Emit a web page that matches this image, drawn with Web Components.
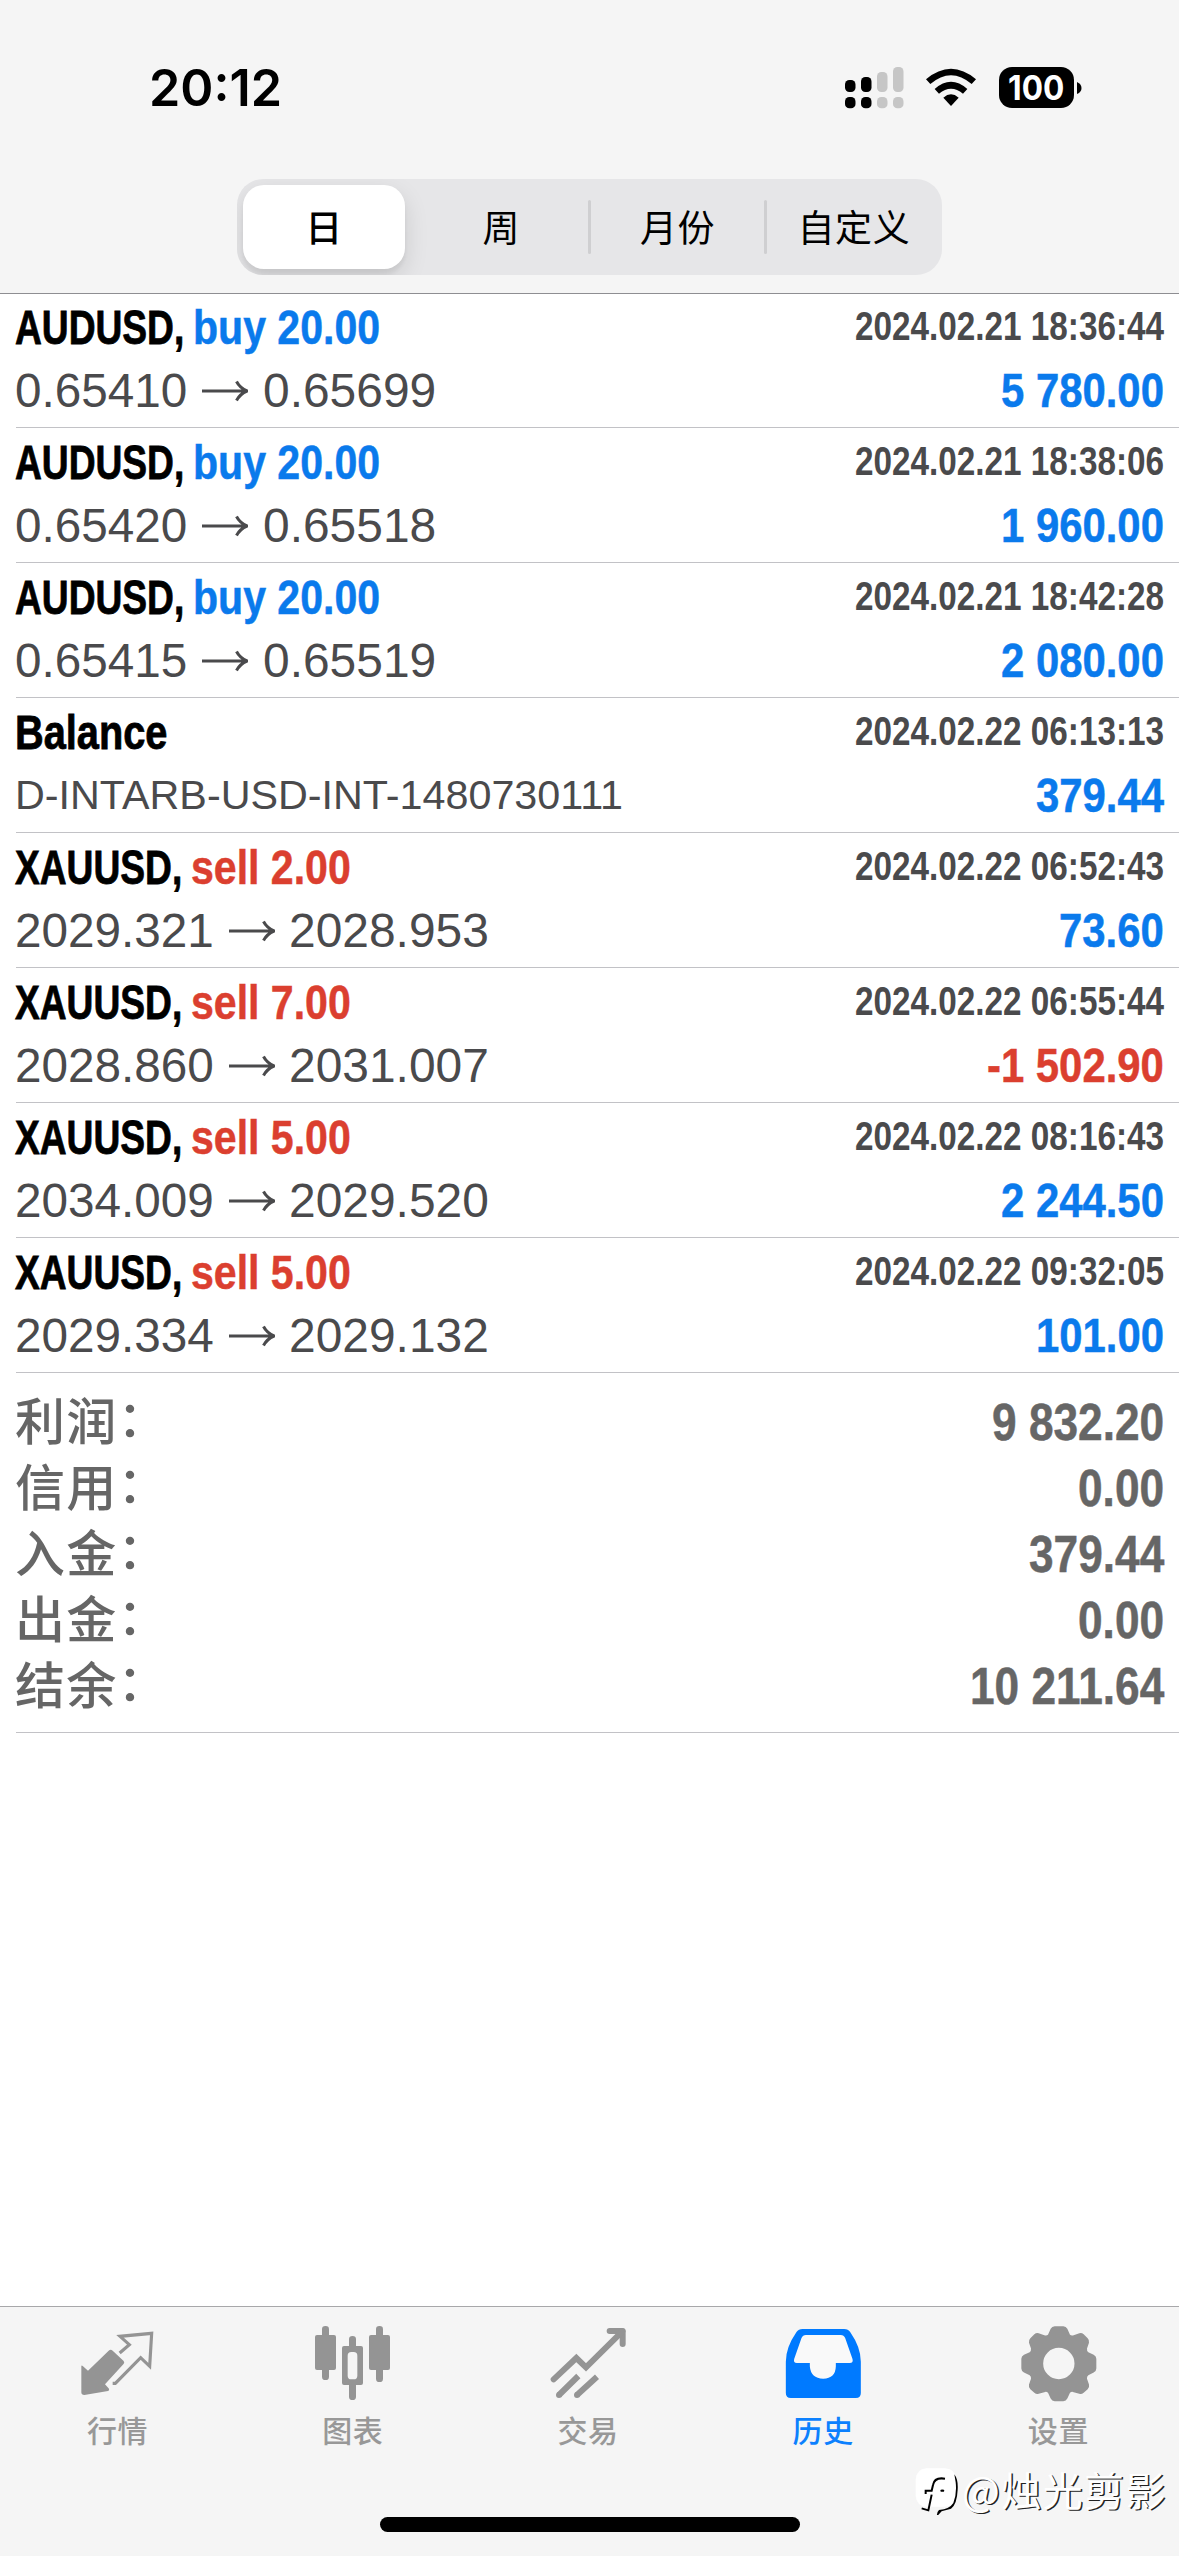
<!DOCTYPE html>
<html lang="zh-CN">
<head>
<meta charset="utf-8">
<title>历史</title>
<style>
html,body{margin:0;padding:0;background:#fff}
body{width:1179px;height:2556px;overflow:hidden;font-family:"Liberation Sans","Noto Sans CJK SC",sans-serif}
</style>
</head>
<body>
<history-app></history-app>
<script>
const define=(name,cls)=>customElements.define(name,cls);
class Base extends HTMLElement{
  connectedCallback(){
    if(this.shadowRoot)return;
    this.attachShadow({mode:'open'}).innerHTML=this.render();
    this.ready&&this.ready();
  }
  a(n){return this.getAttribute(n)||''}
}

/* Condensed text: k is the horizontal scale of the glyphs */
define('cond-text',class extends Base{
  render(){return `<style>:host{display:block;white-space:nowrap;flex:none}span{display:inline-block;transform-origin:0 0;white-space:nowrap}</style><span><slot></slot></span>`}
  ready(){
    const s=this.shadowRoot.querySelector('span'),k=+this.a('k');
    const w=s.getBoundingClientRect().width;
    s.style.transform=`scaleX(${k})`;
    this.style.width=w*k+'px';
  }
});

define('status-bar',class extends Base{
  render(){return `<style>
  :host{display:flex;justify-content:space-between;box-sizing:border-box;height:179px;padding:57px 97px 0 149px;font-family:Inter,sans-serif;color:#000}
  .time{font-size:51px;font-weight:600;line-height:62px}
  .right{display:flex;height:62px;align-items:flex-start}
  svg{display:block}
  .sig{margin:9px 22px 0 0}.wifi{margin:11px 22px 0 0}
  .bat{display:flex;margin-top:10px;align-items:center}
  .cell{width:75px;height:41px;border-radius:13px;background:#000;color:#fff;display:flex;justify-content:center;font-size:34px;font-weight:700;line-height:41px}
  .nub{margin-left:3px}
  </style>
  <cond-text class="time" k=".985">20:12</cond-text>
  <div class="right">
   <svg class="sig" width="59" height="43" viewBox="0 0 59 43"><g fill="#000"><rect x="0" y="14" width="10.5" height="12" rx="4.4"/><rect x="16" y="11" width="10.5" height="15" rx="4.4"/><rect x="0" y="31" width="10.5" height="11.3" rx="4.4"/><rect x="16" y="31" width="10.5" height="11.3" rx="4.4"/></g><g fill="#c6c6c6"><rect x="32" y="6" width="10.5" height="20" rx="4.4"/><rect x="48" y="1" width="10.5" height="25" rx="4.4"/><rect x="32" y="31" width="10.5" height="11.3" rx="4.4"/><rect x="48" y="31" width="10.5" height="11.3" rx="4.4"/></g></svg>
   <svg class="wifi" width="51" height="39" viewBox="440 84 153 117"><path d="M440 118Q515 55 590 118L577 132Q515 79 453 132Z"/><path d="M466 147Q515 104 564 147L551 161Q515 132 479 161Z"/><path d="M492 173Q515 153 538 173L515 198Z"/></svg>
   <div class="bat"><div class="cell"><cond-text k=".93">100</cond-text></div><svg class="nub" width="5" height="12" viewBox="0 0 5 12"><path d="M0 0Q4.5 2 4.5 6T0 12Z"/></svg></div>
  </div>`}
});

define('period-segment',class extends Base{
  render(){return `<style>
  :host{flex:1;display:flex;box-sizing:border-box;padding:6px 7px;position:relative}
  :host([selected]){padding:6px 8px 6px 6px}
  div{flex:1;display:flex;align-items:center;justify-content:center;font:37px/50px "Noto Sans CJK SC",sans-serif;letter-spacing:.6px;color:#000;padding-bottom:2px;border-radius:21px}
  :host([selected]) div{background:#fff;font-weight:500;box-shadow:0 9px 24px rgba(0,0,0,.12),0 5px 4px rgba(0,0,0,.05)}
  :host([rule])::after{content:"";position:absolute;right:-1.5px;top:21px;width:3px;height:54px;border-radius:2px;background:#cfcfd1}
  </style><div><slot></slot></div>`}
});
define('segmented-control',class extends Base{
  render(){return `<style>:host{display:flex;width:705px;height:96px;border-radius:26px;background:#e6e6e8;overflow:hidden}</style><slot></slot>`}
});

define('history-row',class extends Base{
  render(){
    const side=this.a('side'),price=this.a('from');
    const amt=this.a('amount');
    return `<style>
    :host{display:block;box-sizing:border-box;height:135px;padding:3px 0 0 15px;position:relative;background:linear-gradient(#c2c2c6,#c2c2c6) 16px 134px/1163px 1px no-repeat}
    .line{display:flex;align-items:flex-start;height:63px;padding-right:15px;font-size:48px;line-height:63px;color:#4a4a4c}
    .sym{font-weight:700;color:#000;-webkit-text-stroke:.8px #000}
    .side{font-weight:700;margin-left:9px;-webkit-text-stroke:.5px currentColor;color:${side.startsWith('buy')?'#0a7aec':'#db3f2f'}}
    .date{margin-left:auto;font-weight:700;font-size:40px;line-height:61px}
    .amt{margin-left:auto;font-weight:700;-webkit-text-stroke:.5px currentColor;color:${amt[0]==='-'?'#db3f2f':'#0a7aec'}}
    .note{font-size:41px;line-height:62px;margin-left:-.5px}
    svg{margin:21px 14.5px 0 15px;flex:none}
    </style>
    <div class="line"><cond-text class="sym" k="${side?.774:.828}">${this.a('name')}${side?',':''}</cond-text>${side?`<cond-text class="side" k=".855">${side}</cond-text>`:''}<cond-text class="date" k=".832">${this.a('date')}</cond-text></div>
    <div class="line">${price?`<cond-text k=".993">${price}</cond-text><svg width="46" height="22" viewBox="0 0 46 22" fill="none" stroke="#4a4a4c" stroke-width="3"><path d="M0 11H44M34.500 1.500Q38 8 45 11Q38 14 34.500 20.500"/></svg><cond-text k=".998">${this.a('to')}</cond-text>`:`<cond-text class="note" k="1.007">${this.a('note')}</cond-text>`}<cond-text class="amt" k=".872">${amt}</cond-text></div>`}
});

define('summary-row',class extends Base{
  render(){return `<style>
  :host{display:flex;justify-content:space-between;height:66px;color:#666;padding:0 15px}
  .l{font:500 50px/66px "Noto Sans CJK SC",sans-serif;letter-spacing:1.3px}
  .c{line-height:0;vertical-align:3px}
  .v{font-weight:700;font-size:51px;line-height:66px;margin-top:5px;-webkit-text-stroke:.5px currentColor}
  </style><div class="l"><slot></slot><span class="c">：</span></div><cond-text class="v" k=".867">${this.a('value')}</cond-text>`}
});

define('tab-item',class extends Base{
  render(){return `<style>
  :host{flex:1;display:flex;flex-direction:column;align-items:center;color:#949494;padding-top:19px}
  :host([active]){color:#007aff}
  .t{font:500 30px/44px "Noto Sans CJK SC",sans-serif;letter-spacing:.6px;margin-top:5px;opacity:.95}
  </style><slot name="icon"></slot><div class="t"><slot></slot></div>`}
});

define('photo-credit',class extends Base{
  render(){return `<style>
  :host{position:absolute;left:915px;top:2459px;display:flex;align-items:center;height:60px;color:#fff}
  svg{display:block;flex:none;margin:4px 3px 0 0}
  .t{font:40px/56px "Noto Sans CJK SC",sans-serif;letter-spacing:1.400px;text-shadow:1.500px 1px 0 #222;white-space:nowrap}
  </style><svg width="44" height="48" viewBox="30 20 132 144"><path fill="#fff" d="M64 24H120Q152 26 154 58V106Q152 136 120 139H64Q34 136 32 106V58Q34 26 64 24Z"/><path fill="none" stroke="#000" stroke-width="6" d="M120 55Q88 50 84 74L80 91H62V101M80 103L70 150L50 144"/><path d="M148 42Q160 58 158 88Q156 132 138 145Q124 149 110 153L96 168Q94 157 102 149Q134 146 145 128Q156 100 152 66Z"/><ellipse cx="112" cy="91" rx="6" ry="3.5"/></svg><div class="t"><slot></slot></div>`}
});

define('history-app',class extends Base{
  render(){
    const rows=[
     ['AUDUSD','buy 20.00','2024.02.21 18:36:44','0.65410','0.65699','5 780.00'],
     ['AUDUSD','buy 20.00','2024.02.21 18:38:06','0.65420','0.65518','1 960.00'],
     ['AUDUSD','buy 20.00','2024.02.21 18:42:28','0.65415','0.65519','2 080.00'],
     ['Balance','','2024.02.22 06:13:13','','','379.44','D-INTARB-USD-INT-1480730111'],
     ['XAUUSD','sell 2.00','2024.02.22 06:52:43','2029.321','2028.953','73.60'],
     ['XAUUSD','sell 7.00','2024.02.22 06:55:44','2028.860','2031.007','-1 502.90'],
     ['XAUUSD','sell 5.00','2024.02.22 08:16:43','2034.009','2029.520','2 244.50'],
     ['XAUUSD','sell 5.00','2024.02.22 09:32:05','2029.334','2029.132','101.00']];
    const sums=[['利润','9 832.20'],['信用','0.00'],['入金','379.44'],['出金','0.00'],['结余','10 211.64']];
    return `<style>
    :host{display:flex;flex-direction:column;width:1179px;height:2556px;position:relative;background:#fff}
    header{height:293px;background:#f5f5f5;box-shadow:0 1px 0 #8e8e92;position:relative;z-index:1}
    segmented-control{margin:0 auto}
    main{flex:1}
    .sum{box-sizing:border-box;height:360px;padding-top:12px;background:linear-gradient(#c2c2c6,#c2c2c6) 16px 359px/1163px 1px no-repeat}
    footer{height:250px;background:#f5f5f5;box-sizing:border-box;border-top:1px solid #a8a8aa;display:flex;flex-direction:column;align-items:center}
    nav{display:flex;width:1179px;box-sizing:border-box;padding-right:3px;height:210px}
    .home{width:420px;height:15px;border-radius:8px;background:#000}
    svg{display:block;width:76px;height:76px;fill:currentColor}
    </style>
    <header><status-bar></status-bar><segmented-control><period-segment selected>日</period-segment><period-segment rule>周</period-segment><period-segment rule>月份</period-segment><period-segment>自定义</period-segment></segmented-control></header>
    <main>${rows.map(r=>`<history-row name="${r[0]}" side="${r[1]}" date="${r[2]}" from="${r[3]}" to="${r[4]}" amount="${r[5]}" note="${r[6]||''}"></history-row>`).join('')}
    <div class="sum">${sums.map(s=>`<summary-row value="${s[1]}">${s[0]}</summary-row>`).join('')}</div></main>
    <footer><nav>
    <tab-item><svg slot="icon" viewBox="119 108 228 228"><path d="M123 228Q124 225 128 229L143 242L205 182Q211 177 217 182L250 213Q254 218 249 223L194 283L206 296Q208 302 203 303L132 315Q123 315 123 307Z"/><path fill="none" stroke="currentColor" stroke-width="9.500" d="M238 189L267 164L239 139L334 130L328 229L301 203L225 280H217"/></svg>行情</tab-item>
    <tab-item><svg slot="icon" viewBox="825 108 228 228"><rect x="825" y="135" width="63" height="105" rx="6"/><rect x="846" y="108" width="21" height="162" rx="10"/><rect x="987" y="135" width="63" height="105" rx="6"/><rect x="1008" y="108" width="21" height="168" rx="10"/><path fill-rule="evenodd" d="M912 168H927V148Q927 138 937.500 138T948 148V168H963Q969 168 969 174V279Q969 285 963 285H948V320Q948 330 937.500 330T927 320V285H912Q906 285 906 279V174Q906 168 912 168ZM934 186Q923 186 923 197V257Q923 268 934 268H941Q952 268 952 257V197Q952 186 941 186Z"/></svg>图表</tab-item>
    <tab-item><svg slot="icon" viewBox="151 108 228 228"><g fill="none" stroke="currentColor" stroke-width="18"><path stroke-linecap="round" stroke-linejoin="round" d="M330 123H369V162"/><path stroke-linecap="round" d="M162 268L230 204L259 232L368 124"/><path d="M178 315L236 258M232 315L292 260"/></g><circle cx="178" cy="315" r="9"/><circle cx="232" cy="315" r="9"/></svg>交易</tab-item>
    <tab-item active><svg slot="icon" viewBox="855.5 108 228 228"><path fill="#f9f9f9" d="M905 130H1035L1065 222L1010 235Q1005 270 970 270T930 235L875 222Z"/><path fill-rule="evenodd" d="M908 117H1033Q1045 117 1051 126Q1083 172 1083 215V309Q1083 324 1068 324H873Q858 324 858 309V215Q858 172 890 126Q896 117 908 117ZM918 135Q909 135 905 144L883 207Q880 219 891 219H930V229Q933 266 970 266T1008 229V219H1050Q1061 219 1058 207L1036 144Q1032 135 1023 135Z"/></svg>历史</tab-item>
    <tab-item><svg slot="icon" viewBox="425 107.500 228 228" style="overflow:visible"><path fill-rule="evenodd" d="M529 108H555Q563 108 567 116L575 134Q580 138 586 135L603 129Q610 127 616 132L628 144Q634 150 632 158L626 175Q625 182 630 186L646 194Q654 198 654 206V235Q654 243 646 247L630 255Q625 259 626 266L632 283Q634 291 628 297L616 308Q610 313 603 311L586 306Q580 303 575 308L567 325Q563 333 555 333H529Q521 333 517 325L509 308Q504 303 498 306L481 311Q474 313 468 308L456 297Q450 291 452 283L458 266Q459 259 454 255L437 247Q429 243 429 235V206Q429 198 437 194L454 186Q459 182 458 175L452 158Q450 150 456 144L468 132Q474 127 481 129L498 135Q504 138 509 134L517 116Q521 108 529 108ZM541.500 173A47 47 0 1 0 541.500 267A47 47 0 1 0 541.500 173Z"/></svg>设置</tab-item>
    </nav><div class="home"></div></footer>
    <photo-credit>@烛光剪影</photo-credit>`}
});
</script>
</body>
</html>
